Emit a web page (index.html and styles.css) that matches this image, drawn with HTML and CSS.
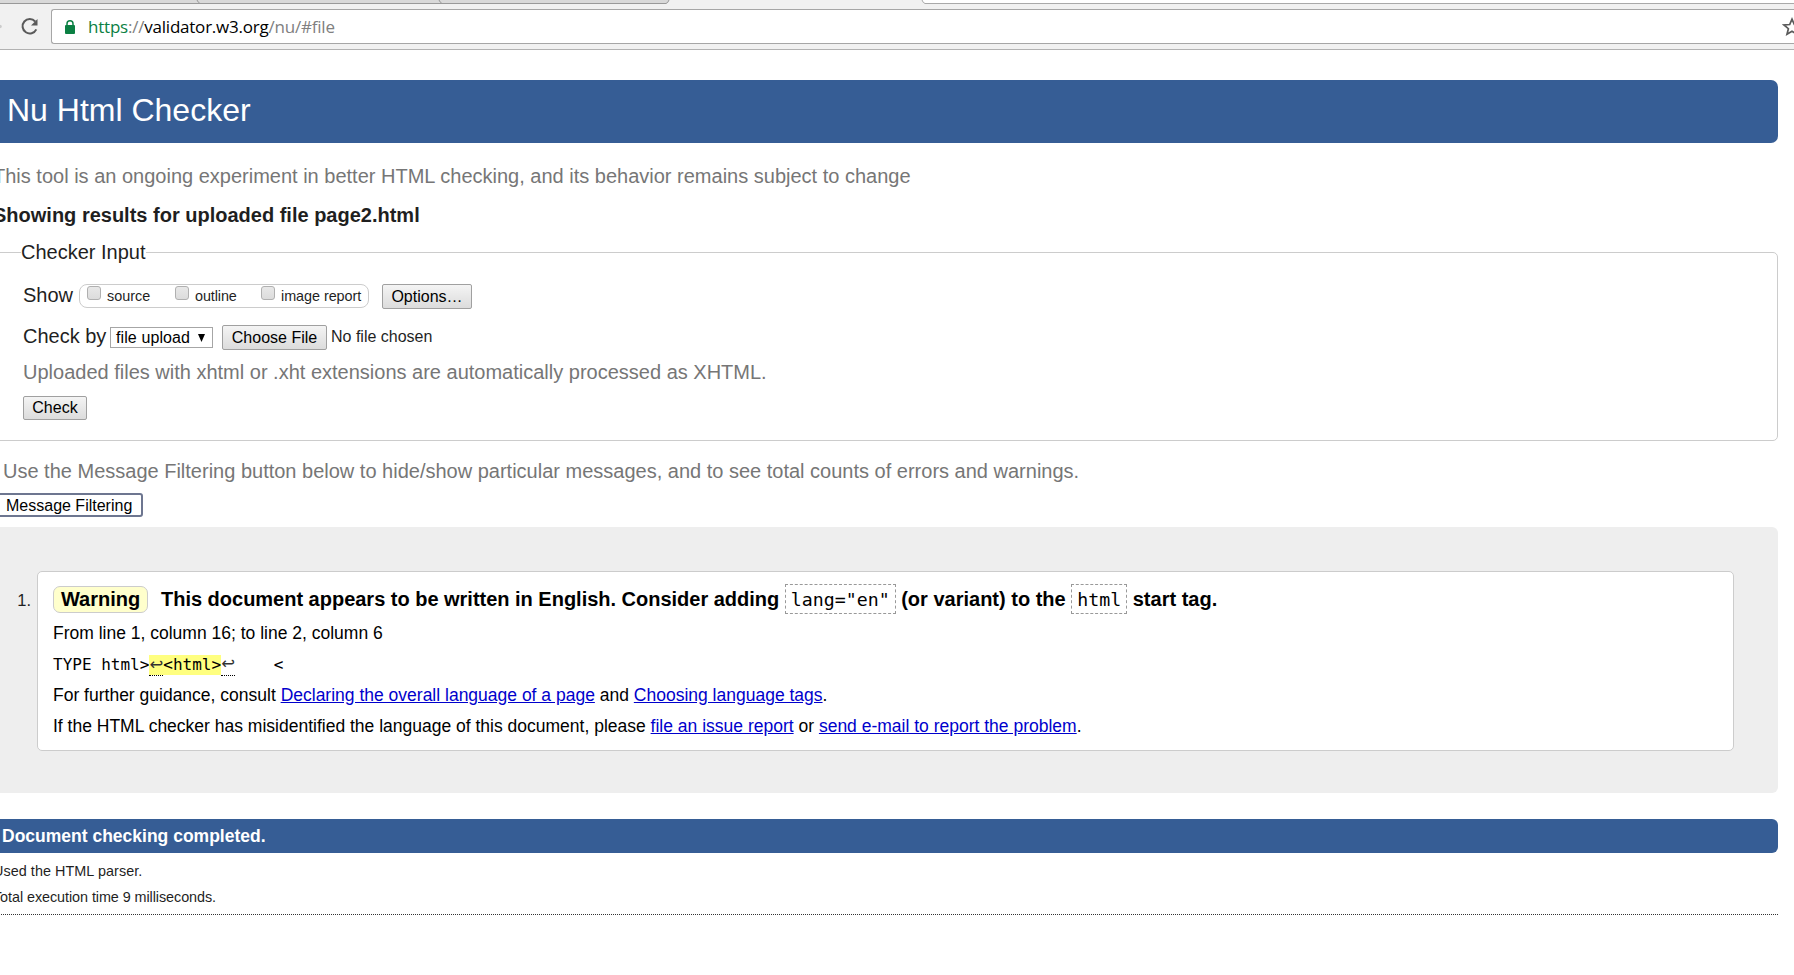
FILE: index.html
```html
<!DOCTYPE html>
<html lang="en">
<head>
<meta charset="utf-8">
<title>Nu Html Checker</title>
<link rel="stylesheet" href="styles.css">
</head>
<body>
<div class="chrome">
  <svg class="tabs" width="1794" height="4" viewBox="0 0 1794 4"><path d="M0 0H669L667 3.5H0Z" fill="#d9d9d9"/><path d="M0 3.5H666Q668 3 669 0M197 0Q198 2.500 200 3.500M439 0Q440 2.500 442 3.500" fill="none" stroke="#999"/><path d="M922 0Q923 3 925 3.500H1794V0Z" fill="#fff"/><path d="M922 0Q923 3 925 3.500H1794" fill="none" stroke="#a9a9a9"/></svg>
  <div class="toolbar">
    <svg class="nav" width="51" height="35" viewBox="0 0 51 35"><circle cx="0" cy="17.500" r="1.800" fill="#ccc"/><path d="M35.200 12.500A7.200 7.200 0 1 0 36.300 20.300" fill="none" stroke="#5a5a5a" stroke-width="2"/><path d="M37.500 10V16.500H31Z" fill="#5a5a5a"/></svg>
    <div class="omnibox">
      <svg class="lock" width="10" height="14" viewBox="0 0 10 14"><path d="M2 6V3.800a3 3 0 0 1 6 0V6" fill="none" stroke="#0b8043" stroke-width="1.500"/><rect y="5" width="10" height="9" rx="1" fill="#0b8043"/></svg>
      <span class="url"><span class="scheme">https</span>://<span class="host">validator.w3.org</span>/nu/#file</span>
      <svg class="star" width="12" height="20" viewBox="0 0 12 20"><path d="M10 2.200L12.300 7.500L18 8L13.600 11.700L15 17.200L10 14.200L5 17.200L6.400 11.700L2 8L7.700 7.500Z" fill="none" stroke="#5a5a5a" stroke-width="1.700"/></svg>
    </div>
  </div>
</div>
<main class="page">
  <h1 class="title">Nu Html Checker</h1>
  <p class="intro">This tool is an ongoing experiment in better HTML checking, and its behavior remains subject to change</p>
  <h2 class="subject">Showing results for uploaded file page2.html</h2>
  <section class="inputs">
    <div class="legend"><span>Checker Input</span></div>
    <div class="row show">
      <span class="label">Show</span>
      <div class="options">
        <label class="source"><i class="box"></i>source</label>
        <label class="outline"><i class="box"></i>outline</label>
        <label class="image"><i class="box"></i>image report</label>
      </div>
      <button class="btn more">Options…</button>
    </div>
    <div class="row by">
      <span class="label">Check by</span>
      <span class="select">file upload<svg width="7" height="8" viewBox="0 0 7 8"><path d="M0 0H7L3.500 8Z" fill="#000"/></svg></span>
      <button class="btn choose">Choose File</button>
      <span class="nofile">No file chosen</span>
    </div>
    <p class="hint">Uploaded files with xhtml or .xht extensions are automatically processed as XHTML.</p>
    <button class="btn check">Check</button>
  </section>
  <p class="filter-note">Use the Message Filtering button below to hide/show particular messages, and to see total counts of errors and warnings.</p>
  <button class="filtering">Message Filtering</button>
  <section class="results">
    <span class="number">1.</span>
    <article class="message">
      <p class="headline"><strong class="badge">Warning</strong><span><span class="lead">This document appears to be written in English. Consider adding</span> <code>lang="en"</code> (or variant) to the <code>html</code> start tag.</span></p>
      <p class="location">From line 1, column 16; to line 2, column 6</p>
      <p class="extract">TYPE html&gt;<b class="mark"><span class="lf">↩</span>&lt;html&gt;</b><span class="lf">↩</span>    &lt;</p>
      <p class="guide">For further guidance, consult <a>Declaring the overall language of a page</a> and <a>Choosing language tags</a>.</p>
      <p class="guide">If the HTML checker has misidentified the language of this document, please <a>file an issue report</a> or <a>send e-mail to report the problem</a>.</p>
    </article>
  </section>
  <p class="done">Document checking completed.</p>
  <p class="detail parser">Used the HTML parser.</p>
  <p class="detail time">Total execution time 9 milliseconds.</p>
  <hr class="rule">
</main>
</body>
</html>
```
FILE: styles.css
```css
* { box-sizing: border-box; }
body { margin: 0; background: #fff; overflow: hidden; font: 20px/24px "Liberation Sans", Arial, sans-serif; color: #1f1f1f; }
p, h1, h2 { margin: 0; white-space: nowrap; }
svg { display: block; flex: none; }
button { font-family: inherit; padding: 0; margin: 0; }

.chrome { height: 50px; background: #f1f1f1; border-bottom: 1px solid #b2b2b2; }
.toolbar { display: flex; padding-top: 5px; }
.omnibox { display: flex; align-items: center; flex: 1; height: 35px; background: #fff; border: 1px solid #a6a6a6; border-right: 0; border-radius: 3px 0 0 3px; padding-left: 13px; }
.url { flex: 1; margin-left: 13px; font: 17px/30px "Open Sans", "Noto Sans", sans-serif; letter-spacing: -0.22px; color: #808080; }
.scheme { color: #0b8043; }
.host { color: #000; }

.page { width: 1785px; margin-left: -7px; padding-top: 30px; }
.title { height: 63px; padding: 0 0 0 14px; background: #365d95; border-radius: 7px; color: #fff; font-size: 32px; font-weight: 400; line-height: 60px; }
.intro { margin-top: 21px; color: #767676; }
.subject { margin-top: 15px; font-size: 20px; line-height: 24px; }
.inputs { height: 189px; margin-top: 25px; border: 1px solid #ccc; border-radius: 5px; padding-left: 29px; }
.legend { height: 24px; margin-top: -13px; margin-left: -2px; }
.legend span { display: inline-block; background: #fff; }
.row { display: flex; margin-left: -1px; }
.show { margin-top: 20px; height: 25px; }
.show .label { width: 57px; line-height: 22px; padding-left: 1px; }
.options { display: flex; width: 290px; height: 24px; border: 1px solid #ccc; border-radius: 8px; font-size: 14.400px; line-height: 22px; }
.options label { display: flex; white-space: nowrap; }
.source { margin-left: 7px; width: 88px; }
.outline { width: 86px; letter-spacing: -0.1px; }
.image { letter-spacing: -0.05px; }
.box { width: 14px; height: 14px; margin: 1px 6px 0 0; flex: none; border: 1px solid #b0b0b0; border-radius: 3px; background: linear-gradient(#e8e8e8, #dcdcdc); }
.btn { font-size: 16px; color: #000; border: 1px solid #a0a0a0; border-radius: 2px; background: linear-gradient(#f4f4f4, #dcdcdc); }
.more { width: 90px; height: 25px; margin-left: 13px; line-height: 21px; }
.by { margin-top: 16px; height: 25px; }
.by .label { width: 88px; padding-left: 1px; line-height: 23px; white-space: nowrap; }
.select { display: flex; align-items: center; gap: 8px; width: 103px; height: 21px; margin-top: 2px; padding-left: 5px; border: 1px solid #a6a6a6; font-size: 16px; letter-spacing: 0.1px; color: #000; white-space: nowrap; }
.choose { width: 105px; height: 25px; margin-left: 9px; line-height: 21px; }
.nofile { margin-left: 4px; font-size: 16px; line-height: 23px; white-space: nowrap; }
.hint { margin: 10px 0 0; color: #767676; }
.check { display: block; width: 64px; height: 24px; margin-top: 12px; line-height: 20px; }
.filter-note { margin: 18px 0 0 10px; color: #767676; }
.filtering { display: block; width: 150px; height: 24px; margin-top: 10px; padding-left: 11px; border: 2px solid #6d7690; border-radius: 3px; background: #fff; color: #000; font-size: 16px; line-height: 19px; text-align: left; white-space: nowrap; }
.results { display: flex; height: 266px; margin-top: 10px; padding-top: 44px; background: #eee; border-radius: 6px; }
.number { width: 44px; padding: 17px 6px 0 0; font-size: 16.500px; text-align: right; }
.message { width: 1697px; height: 180px; border: 1px solid #ccc; border-radius: 5px; padding: 14px 0 0 15px; background: #fff; color: #000; font-size: 17.500px; }
.headline { display: flex; height: 27px; font-size: 20px; font-weight: 700; line-height: 26px; }
.lead { letter-spacing: -0.012px; }
.badge { width: 95px; height: 27px; margin-right: 13px; border: 1px solid #ccc; border-radius: 7px; background: #ffffcc; text-align: center; line-height: 24px; }
code { font: 400 18.250px/26px "DejaVu Sans Mono", monospace; border: 1px dashed #999; padding: 4px 5px 3px; }
.location { margin-top: 8px; }
.extract { margin-top: 8px; height: 23px; font: 16px/24px "DejaVu Sans Mono", monospace; white-space: pre; }
.mark { display: inline-block; height: 20px; line-height: 20px; background: #ffff80; font-weight: 400; }
.lf { display: inline-block; width: 14px; height: 21px; font: 16.500px/20px "DejaVu Sans", sans-serif; color: #333; border-bottom: 1px dotted #000; vertical-align: top; text-align: center; }
.extract > .lf { line-height: 22px; height: 23px; }
.guide { margin-top: 7px; }
.guide a { color: #0000cc; text-decoration: underline; }
.done { height: 34px; margin-top: 26px; padding-left: 9px; border-radius: 6px; background: #365d95; color: #fff; font-size: 17.500px; font-weight: 700; line-height: 34px; }
.detail { font-size: 14.400px; line-height: 19px; }
.parser { margin-top: 9px; letter-spacing: 0.05px; }
.time { margin-top: 7px; letter-spacing: -0.07px; }
.rule { height: 1px; margin: 7px 0 0; border: 0; border-top: 1px dotted #333; }
```
